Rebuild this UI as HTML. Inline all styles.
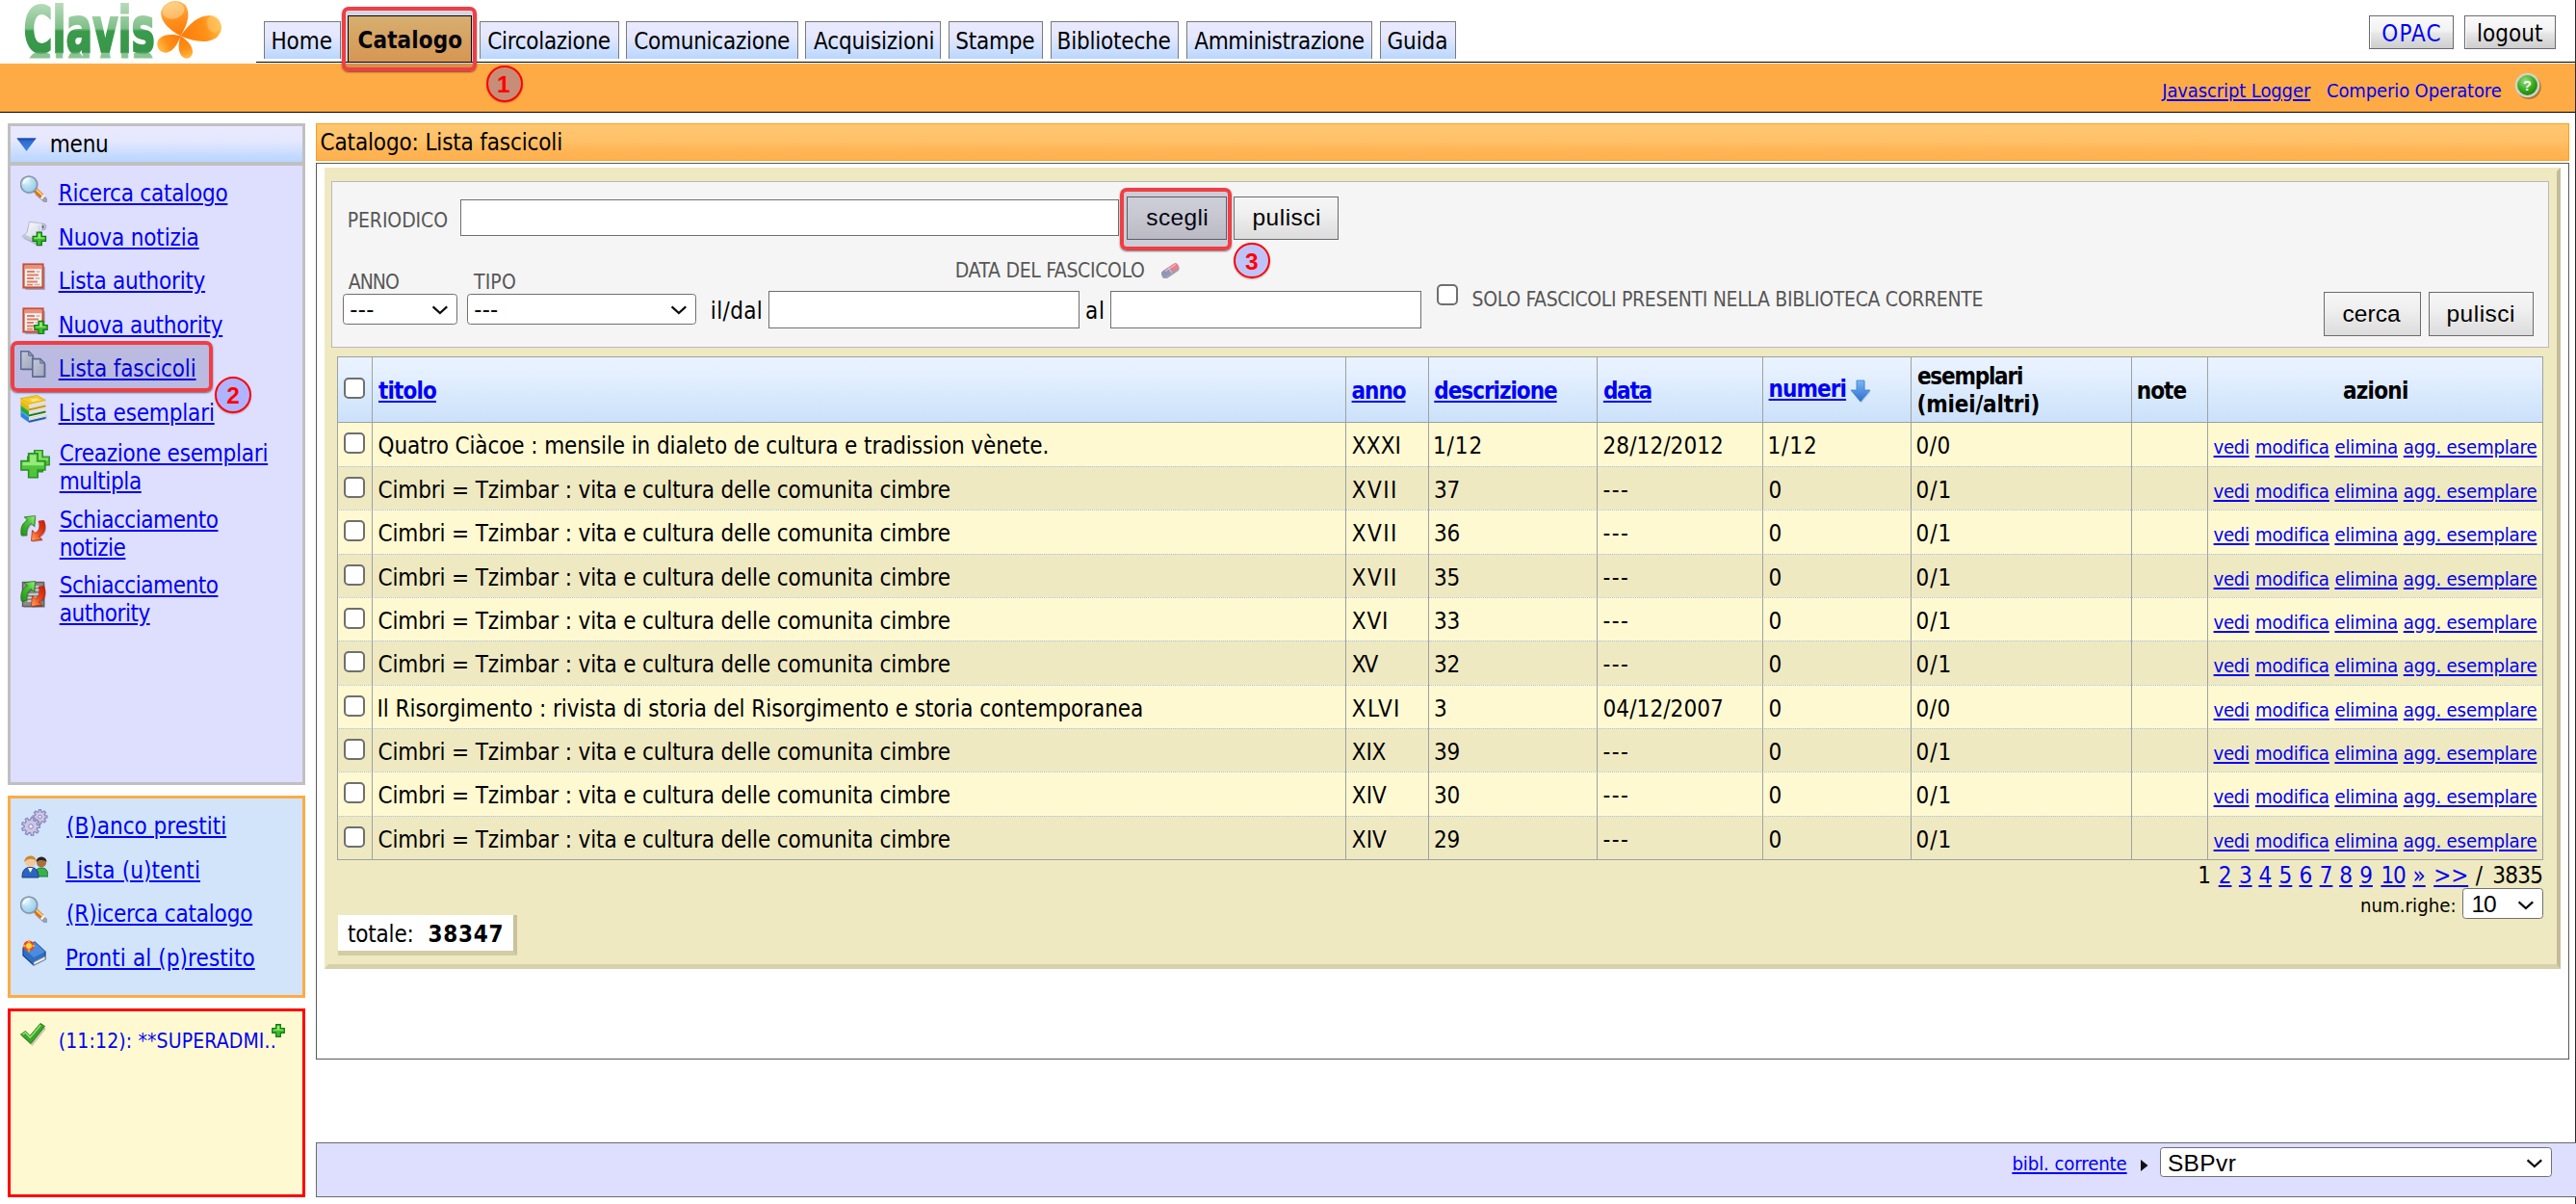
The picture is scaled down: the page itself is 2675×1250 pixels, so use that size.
<!DOCTYPE html>
<html lang="it">
<head>
<meta charset="utf-8">
<title>Clavis - Catalogo: Lista fascicoli</title>
<style>
html,body{margin:0;padding:0;background:#fff;}
body{width:2675px;height:1250px;position:relative;overflow:hidden;font-family:"DejaVu Sans Condensed","Liberation Sans","DejaVu Sans",sans-serif;font-size:24px;color:#000;}
div,span,svg,a{position:absolute;box-sizing:border-box;}
.t{white-space:nowrap;}
.u{text-decoration:underline;text-decoration-thickness:2px;text-underline-offset:2px;}
.b{color:#0000f0;}

</style>
</head>
<body>
<!-- header -->
<svg style="left:20px;top:0px" width="216" height="64" viewBox="0 0 216 64"><defs><linearGradient id="lg1" gradientUnits="userSpaceOnUse" x1="0" y1="5" x2="0" y2="54"><stop offset="0" stop-color="#b5d9b8"/><stop offset=".5" stop-color="#7fbf88"/><stop offset=".56" stop-color="#3b9b4c"/><stop offset="1" stop-color="#37964a"/></linearGradient><linearGradient id="lg2" gradientUnits="userSpaceOnUse" x1="0" y1="54" x2="0" y2="62"><stop offset="0" stop-color="#6db577" stop-opacity=".8"/><stop offset="1" stop-color="#8cc694" stop-opacity=".25"/></linearGradient><linearGradient id="pg1" x1="0" y1="0" x2="1" y2="0"><stop offset="0" stop-color="#ff7a08"/><stop offset=".55" stop-color="#ff9522"/><stop offset="1" stop-color="#ffc46a"/></linearGradient><linearGradient id="pg2" x1="0" y1="0" x2="1" y2="0"><stop offset="0" stop-color="#ff7a08"/><stop offset=".6" stop-color="#ff9118"/><stop offset="1" stop-color="#ffbe4a"/></linearGradient><clipPath id="cpr"><rect x="0" y="54.500" width="150" height="6"/></clipPath></defs><g transform="translate(4.500 0) scale(.688 1)"><text x="0" y="53.600" font-family="'DejaVu Sans Condensed','Liberation Sans','DejaVu Sans',sans-serif" font-weight="700" font-size="66" fill="url(#lg1)" stroke="url(#lg1)" stroke-width="2.200">Clavis</text></g><g clip-path="url(#cpr)"><g transform="translate(4.500 108) scale(.688 -1)"><text x="0" y="53.600" font-family="'DejaVu Sans Condensed','Liberation Sans','DejaVu Sans',sans-serif" font-weight="700" font-size="66" fill="url(#lg2)">Clavis</text></g></g><path transform="translate(167.5 37.3) rotate(-105)" d="M0 0 C10.4 -10.9 20.4 -16.2 29.6 -13.1 C39.6 -7.2 39.6 7.2 29.6 13.1 C20.4 16.2 10.4 10.9 0 0Z" fill="url(#pg1)"/><path transform="translate(167.5 37.3) rotate(-16)" d="M0 0 C12.2 -10.1 23.9 -15.1 34.8 -12.2 C46.5 -6.8 46.5 6.8 34.8 12.2 C23.9 15.1 12.2 10.1 0 0Z" fill="url(#pg2)"/><path transform="translate(167.5 37.3) rotate(151)" d="M0 0 C7.4 -6.8 14.6 -10.1 21.2 -8.1 C28.4 -4.5 28.4 4.5 21.2 8.1 C14.6 10.1 7.4 6.8 0 0Z" fill="url(#pg2)"/><path transform="translate(167.5 37.3) rotate(70)" d="M0 0 C6.9 -5.2 13.5 -7.8 19.6 -6.3 C26.2 -3.5 26.2 3.5 19.6 6.3 C13.5 7.8 6.9 5.2 0 0Z" fill="url(#pg2)"/><ellipse cx="160" cy="11" rx="11.500" ry="8.500" fill="#ffe2ae" opacity=".5" transform="rotate(-12 160 11)"/><ellipse cx="202" cy="25" rx="7" ry="9" fill="#ffd07a" opacity=".45" transform="rotate(-16 202 25)"/></svg>
<div style="left:0px;top:66px;width:2674px;height:51px;background:#ffab45;border-bottom:1px solid #000"></div>
<div style="left:2674px;top:0px;width:1px;height:1250px;background:#2a2a2a"></div>
<div style="left:274px;top:22px;width:80px;height:39px;border:1px solid #7a7a7a;border-bottom:0;background:linear-gradient(#e9e9ff 0%,#e6e8ff 35%,#cfe0ff 70%,#b9d6ff 100%)"></div>
<span class="t" style="left:281.40px;top:28px;font-size:24px;line-height:30px;letter-spacing:-0.028px;">Home</span>
<div style="left:498px;top:22px;width:145px;height:39px;border:1px solid #7a7a7a;border-bottom:0;background:linear-gradient(#e9e9ff 0%,#e6e8ff 35%,#cfe0ff 70%,#b9d6ff 100%)"></div>
<span class="t" style="left:506.30px;top:28px;font-size:24px;line-height:30px;letter-spacing:-0.315px;">Circolazione</span>
<div style="left:650px;top:22px;width:179px;height:39px;border:1px solid #7a7a7a;border-bottom:0;background:linear-gradient(#e9e9ff 0%,#e6e8ff 35%,#cfe0ff 70%,#b9d6ff 100%)"></div>
<span class="t" style="left:658.20px;top:28px;font-size:24px;line-height:30px;letter-spacing:-0.261px;">Comunicazione</span>
<div style="left:836px;top:22px;width:141px;height:39px;border:1px solid #7a7a7a;border-bottom:0;background:linear-gradient(#e9e9ff 0%,#e6e8ff 35%,#cfe0ff 70%,#b9d6ff 100%)"></div>
<span class="t" style="left:845.00px;top:28px;font-size:24px;line-height:30px;letter-spacing:-0.145px;">Acquisizioni</span>
<div style="left:985px;top:22px;width:98px;height:39px;border:1px solid #7a7a7a;border-bottom:0;background:linear-gradient(#e9e9ff 0%,#e6e8ff 35%,#cfe0ff 70%,#b9d6ff 100%)"></div>
<span class="t" style="left:992.30px;top:28px;font-size:24px;line-height:30px;letter-spacing:-0.250px;">Stampe</span>
<div style="left:1091px;top:22px;width:133px;height:39px;border:1px solid #7a7a7a;border-bottom:0;background:linear-gradient(#e9e9ff 0%,#e6e8ff 35%,#cfe0ff 70%,#b9d6ff 100%)"></div>
<span class="t" style="left:1097.60px;top:28px;font-size:24px;line-height:30px;letter-spacing:-0.204px;">Biblioteche</span>
<div style="left:1232px;top:22px;width:193px;height:39px;border:1px solid #7a7a7a;border-bottom:0;background:linear-gradient(#e9e9ff 0%,#e6e8ff 35%,#cfe0ff 70%,#b9d6ff 100%)"></div>
<span class="t" style="left:1240.30px;top:28px;font-size:24px;line-height:30px;letter-spacing:-0.369px;">Amministrazione</span>
<div style="left:1433px;top:22px;width:79px;height:39px;border:1px solid #7a7a7a;border-bottom:0;background:linear-gradient(#e9e9ff 0%,#e6e8ff 35%,#cfe0ff 70%,#b9d6ff 100%)"></div>
<span class="t" style="left:1440.40px;top:28px;font-size:24px;line-height:30px;letter-spacing:-0.083px;">Guida</span>
<div style="left:361px;top:16px;width:129px;height:48px;border:1px solid #000;border-bottom:0;background:linear-gradient(#ffcf75,#ffb252)"></div>
<span class="t" style="left:371.60px;top:27px;font-size:24px;line-height:30px;font-weight:700;letter-spacing:0.087px;">Catalogo</span>
<div style="left:266px;top:64px;width:2408px;height:1px;background:#000"></div>
<div style="left:2460px;top:16px;width:88px;height:35px;border:1px solid #6a6a6a;background:linear-gradient(#fafafa 0%,#f2f2f2 46%,#e6e6e6 54%,#cecece 100%);box-shadow:inset 1px 1px 0 #fff"></div>
<span class="t" style="left:2473.30px;top:20px;font-size:24px;line-height:30px;color:#0000f4;letter-spacing:1.127px;">OPAC</span>
<div style="left:2559px;top:16px;width:95px;height:35px;border:1px solid #6a6a6a;background:linear-gradient(#fafafa 0%,#f2f2f2 46%,#e6e6e6 54%,#cecece 100%);box-shadow:inset 1px 1px 0 #fff"></div>
<span class="t" style="left:2571.90px;top:20px;font-size:24px;line-height:30px;letter-spacing:0.078px;">logout</span>
<a class="t u" style="left:2245.20px;top:81px;font-size:20px;line-height:26px;color:#0000f4;letter-spacing:-0.109px;">Javascript Logger</a>
<span class="t" style="left:2416.00px;top:81px;font-size:20px;line-height:26px;color:#0000f4;letter-spacing:-0.124px;">Comperio Operatore</span>
<svg style="left:2609.200px;top:73.400px" width="32" height="32" viewBox="0 0 32 32">
<defs><radialGradient id="hg" cx=".4" cy=".3" r=".75"><stop offset="0" stop-color="#9be27c"/><stop offset=".6" stop-color="#35a81e"/><stop offset="1" stop-color="#1f7d10"/></radialGradient></defs>
<circle cx="17" cy="17.200" r="12.800" fill="#5d4a20" opacity=".5"/>
<circle cx="15.500" cy="15.500" r="12.800" fill="#d2d2ca"/><circle cx="15.500" cy="15.500" r="10.400" fill="url(#hg)"/>
<text x="15.500" y="20.600" text-anchor="middle" font-family="'Liberation Sans',sans-serif" font-weight="700" font-size="14.500" fill="#fff">?</text></svg>
<!-- sidebar menu -->
<div style="left:8px;top:128px;width:309px;height:687px;border:3px solid #c0c0c0;background:#dedeff"></div>
<div style="left:11px;top:131px;width:303px;height:37.5px;background:linear-gradient(#e9e9ff 0%,#e6e8ff 40%,#c4dbff 80%,#b8d5ff 100%)"></div>
<div style="left:11px;top:168px;width:303px;height:4px;background:#c0c0c0"></div>
<svg style="left:16px;top:141px" width="24" height="18" viewBox="0 0 24 18"><defs><linearGradient id="tg" x1="0" y1="0" x2="0" y2="1"><stop offset="0" stop-color="#2a62c8"/><stop offset="1" stop-color="#3b8ae6"/></linearGradient></defs><path d="M1.500 2.500 L21.500 2.500 L11.500 16 Z" fill="url(#tg)"/><path d="M1.500 2.500 L21.500 2.500 L20 4.500 L3 4.500Z" fill="#1d4fae"/></svg>
<span class="t" style="left:51.80px;top:135px;font-size:24px;line-height:30px;letter-spacing:-0.237px;">menu</span>
<svg style="left:21px;top:182px" width="28" height="28" viewBox="0 0 28 28"><defs><radialGradient id="mg" cx=".36" cy=".3" r=".8"><stop offset="0" stop-color="#e4f5fd"/><stop offset=".45" stop-color="#b4def4"/><stop offset="1" stop-color="#8fc9ea"/></radialGradient>
<linearGradient id="mh" x1="0" y1="0" x2="1" y2="0" gradientTransform="rotate(-48 .5 .5)"><stop offset="0" stop-color="#e8801c"/><stop offset=".5" stop-color="#ffd27a"/><stop offset="1" stop-color="#e8801c"/></linearGradient></defs>
<path d="M17 17.500 L25.500 25" stroke="#5a6068" stroke-width="5.400" stroke-linecap="round" opacity=".5" transform="translate(1.400,1.600)"/>
<path d="M15 14.800 L23.600 22.600" stroke="#d8741a" stroke-width="5.200" stroke-linecap="butt"/>
<path d="M15.600 14 L24.200 21.800" stroke="#ffcf7a" stroke-width="1.800"/>
<path d="M22.600 21.700 L24.400 23.300" stroke="#f4f4f4" stroke-width="5.200"/>
<circle cx="9.600" cy="10" r="9.300" fill="#6a7a88" opacity=".35"/>
<circle cx="9" cy="9.400" r="8.500" fill="url(#mg)" stroke="#8696a6" stroke-width="1.500"/>
<path d="M3.800 8 A5.600 5.600 0 0 1 9 3.600" stroke="#fff" stroke-width="1.800" fill="none" stroke-linecap="round" opacity=".9"/></svg>
<a class="t u" style="left:60.70px;top:186px;font-size:24px;line-height:30px;color:#0000f4;letter-spacing:-0.231px;">Ricerca catalogo</a>
<svg style="left:21px;top:227.5px" width="28" height="28" viewBox="0 0 28 28"><defs><linearGradient id="sc" x1="0" y1="0" x2="1" y2="1"><stop offset="0" stop-color="#ffffff"/><stop offset="1" stop-color="#cfd3e2"/></linearGradient></defs>
<path d="M2 18.500 L15 25 L21 22 L8 16z" fill="#7c8098" opacity=".45" transform="translate(1,1)"/>
<path d="M9.500 2.400 L21.500 3.600 L19.500 16.500 L14.500 23.600 L1.800 17.400 L7 13.500z" fill="url(#sc)" stroke="#aab0c4" stroke-width=".9"/>
<path d="M1.800 17.400 L14.500 23.600 L16.500 21 L4.500 15.200z" fill="#c2c7d8"/>
<ellipse cx="23" cy="7.500" rx="3.800" ry="3.400" fill="#c9cde0" stroke="#9aa0b8" stroke-width=".9"/>
<ellipse cx="23.300" cy="7.600" rx="1.500" ry="1.900" fill="#6b7192"/>
<path d="M18.500 3.300 L22.500 4.200 L22.500 11 L19.800 10.800z" fill="#dfe2ee"/><g transform="translate(19.8,19.9) scale(0.96)"><path d="M-2.6 -7 h5.2 v4.4 h4.4 v5.2 h-4.4 v4.4 h-5.2 v-4.4 h-4.4 v-5.2 h4.4z" fill="#3dbb2c" stroke="#0f7a12" stroke-width="1.3"/><path d="M-1.4 -5.6 h2.8 v4.2 h4.2 v1.2 h-11.2 v-1.2 h4.2z" fill="#a4f284" opacity=".85"/></g></svg>
<a class="t u" style="left:60.70px;top:232px;font-size:24px;line-height:30px;color:#0000f4;letter-spacing:-0.141px;">Nuova notizia</a>
<svg style="left:22px;top:273px" width="28" height="28" viewBox="0 0 28 28"><rect x="2.500" y="2" width="20.500" height="24.500" rx="1" fill="#6a6a78" opacity=".5" transform="translate(1.800,1.800)"/>
<rect x="2.500" y="1.500" width="20" height="24" fill="#fdf1ec" stroke="#c4503a" stroke-width="2.200"/>
<rect x="3.600" y="2.600" width="17.800" height="3.600" fill="#e8917c"/>
<g stroke="#d9806c" stroke-width="1.800"><path d="M6 9 h8 M6 12.500 h12 M6 16 h7 M6 19.500 h11 M6 22.600 h6"/></g>
<g stroke="#b8b8b8" stroke-width="1.500"><path d="M15.500 9 h4 M14.500 16 h5 M13.500 22.600 h6"/></g></svg>
<a class="t u" style="left:60.70px;top:277px;font-size:24px;line-height:30px;color:#0000f4;letter-spacing:-0.252px;">Lista authority</a>
<svg style="left:22px;top:318.5px" width="28" height="28" viewBox="0 0 28 28"><rect x="2.500" y="2" width="20.500" height="24.500" rx="1" fill="#6a6a78" opacity=".5" transform="translate(1.800,1.800)"/>
<rect x="2.500" y="1.500" width="20" height="24" fill="#fdf1ec" stroke="#c4503a" stroke-width="2.200"/>
<rect x="3.600" y="2.600" width="17.800" height="3.600" fill="#e8917c"/>
<g stroke="#d9806c" stroke-width="1.800"><path d="M6 9 h8 M6 12.500 h12 M6 16 h7 M6 19.500 h11 M6 22.600 h6"/></g>
<g stroke="#b8b8b8" stroke-width="1.500"><path d="M15.500 9 h4 M14.500 16 h5 M13.500 22.600 h6"/></g><g transform="translate(20.5,21) scale(0.95)"><path d="M-2.6 -7 h5.2 v4.4 h4.4 v5.2 h-4.4 v4.4 h-5.2 v-4.4 h-4.4 v-5.2 h4.4z" fill="#3dbb2c" stroke="#0f7a12" stroke-width="1.3"/><path d="M-1.4 -5.6 h2.8 v4.2 h4.2 v1.2 h-11.2 v-1.2 h4.2z" fill="#a4f284" opacity=".85"/></g></svg>
<a class="t u" style="left:60.70px;top:323px;font-size:24px;line-height:30px;color:#0000f4;letter-spacing:-0.251px;">Nuova authority</a>
<svg style="left:21px;top:364px" width="28" height="28" viewBox="0 0 28 28"><defs><linearGradient id="pg" x1="0" y1="0" x2="1" y2="1"><stop offset="0" stop-color="#eceff4"/><stop offset="1" stop-color="#bcc6d6"/></linearGradient></defs><g transform="translate(-0.3,-0.3)"><path d="M1 1 h8 l4.500 4.500 v14 h-12.500z" fill="#4a5880" opacity=".45" transform="translate(1.200,1.400)"/><path d="M1 1 h8 l4.500 4.500 v14 h-12.500z" fill="url(#pg)" stroke="#6c7b9c" stroke-width="1.600" stroke-linejoin="round"/><path d="M9 1 v4.500 h4.500z" fill="#aeb9cc" stroke="#6c7b9c" stroke-width="1"/></g><g transform="translate(11.8,7.6)"><path d="M1 1 h8 l4.500 4.500 v14 h-12.500z" fill="#4a5880" opacity=".45" transform="translate(1.200,1.400)"/><path d="M1 1 h8 l4.500 4.500 v14 h-12.500z" fill="url(#pg)" stroke="#6c7b9c" stroke-width="1.600" stroke-linejoin="round"/><path d="M9 1 v4.500 h4.500z" fill="#aeb9cc" stroke="#6c7b9c" stroke-width="1"/></g></svg>
<a class="t u" style="left:60.70px;top:368px;font-size:24px;line-height:30px;color:#0000f4;letter-spacing:-0.132px;">Lista fascicoli</a>
<svg style="left:21px;top:409.5px" width="28" height="30" viewBox="0 0 28 30"><path d="M1 23 L9.500 29 L27.500 25 L27.500 21z" fill="#5a5a7a" opacity=".3"/><g transform="translate(0,12.5)"><path d="M0.500 3.500 L9 9.500 L9 16 L0.500 10z" fill="#2a86e2"/><path d="M0.500 3.500 L9 9.500 L9 11.300 L0.500 5.300z" fill="#7cc0ff" opacity=".6"/><path d="M9 9.500 L26.500 5.500 L26.500 12 L9 16z" fill="#f4f4f2"/><path d="M9 11.600 L26.500 7.600 M9 13.400 L26.500 9.400" stroke="#c4c4bc" stroke-width=".8"/><path d="M9 14.300 L26.500 10.300 L26.500 12.200 L9 16.200z" fill="#1c5aa8"/></g><g transform="translate(0,6.3)"><path d="M0.500 3.500 L9 9.500 L9 16 L0.500 10z" fill="#2aa638"/><path d="M0.500 3.500 L9 9.500 L9 11.300 L0.500 5.300z" fill="#7ee48a" opacity=".6"/><path d="M9 9.500 L26.500 5.500 L26.500 12 L9 16z" fill="#f4f4f2"/><path d="M9 11.600 L26.500 7.600 M9 13.400 L26.500 9.400" stroke="#c4c4bc" stroke-width=".8"/><path d="M9 14.300 L26.500 10.300 L26.500 12.200 L9 16.200z" fill="#167a24"/></g><g transform="translate(0,0.2)"><path d="M0.500 3.500 L9 9.500 L9 16 L0.500 10z" fill="#ecb800"/><path d="M0.500 3.500 L9 9.500 L9 11.300 L0.500 5.300z" fill="#ffe47a" opacity=".6"/><path d="M9 9.500 L26.500 5.500 L26.500 12 L9 16z" fill="#f4f4f2"/><path d="M9 11.600 L26.500 7.600 M9 13.400 L26.500 9.400" stroke="#c4c4bc" stroke-width=".8"/><path d="M9 14.300 L26.500 10.300 L26.500 12.200 L9 16.200z" fill="#c89400"/></g><path d="M0.500 3.700 L17.500 0.500 L26.500 5.700 L9 9.700z" fill="#f6cb25" stroke="#cf9f08" stroke-width=".7"/><path d="M9.500 4.800 L17 3.400 L20.500 5.300 L13 6.900z" fill="#fbe78c"/></svg>
<a class="t u" style="left:60.70px;top:414px;font-size:24px;line-height:30px;color:#0000f4;letter-spacing:-0.164px;">Lista esemplari</a>
<svg style="left:20.5px;top:467px" width="32" height="30" viewBox="0 0 32 30"><g transform="translate(19,11.500) scale(.9)"><path d="M-4.800 -12.500 h9.600 v7.700 h7.700 v9.600 h-7.700 v7.700 h-9.600 v-7.700 h-7.700 v-9.600 h7.700z" fill="#4fbf3d" stroke="#2a9422" stroke-width="1.500"/><path d="M-3.300 -11 h6.600 v7.700 h7.700 v3.300 h-22 v-3.300 h7.700z" fill="#9bec7c" opacity=".7"/></g>
<g transform="translate(13.400,16.200)"><path d="M-4.800 -12.500 h9.600 v7.700 h7.700 v9.600 h-7.700 v7.700 h-9.600 v-7.700 h-7.700 v-9.600 h7.700z" fill="#50c43c" stroke="#279020" stroke-width="1.500"/>
<path d="M-3.300 -11 h6.600 v7.700 h7.700 v3.300 h-22 v-3.300 h7.700z" fill="#a8f28a" opacity=".8"/></g></svg>
<a class="t u" style="left:61.70px;top:456px;font-size:24px;line-height:30px;color:#0000f4;letter-spacing:-0.238px;">Creazione esemplari</a>
<a class="t u" style="left:61.70px;top:485px;font-size:24px;line-height:30px;color:#0000f4;letter-spacing:-0.385px;">multipla</a>
<svg style="left:21px;top:535px" width="29" height="29" viewBox="0 0 29 29"><defs><linearGradient id="ag" x1="0" y1="1" x2="1" y2="0"><stop offset="0" stop-color="#1f8f14"/><stop offset=".6" stop-color="#4cc23a"/><stop offset="1" stop-color="#a6f08a"/></linearGradient>
<linearGradient id="ar" x1="1" y1="0" x2="0" y2="1"><stop offset="0" stop-color="#c81808"/><stop offset=".55" stop-color="#ee4a1e"/><stop offset="1" stop-color="#ffb066"/></linearGradient></defs><path d="M15.500 0.500 L14.500 11.500 L11.300 8.600 C8 10.500 6.200 15 6.800 20.500 L1.200 21 C-0.300 13 2.500 7.500 7.600 5 L4.200 1.800Z" fill="#30403a" opacity=".35" transform="translate(1,1.300)"/>
<path d="M11.500 26.500 L12.500 15.500 L15.700 18.400 C19.500 16.500 21 12 19.200 6 L24.600 5.500 C27.500 13.500 25 19.500 19.400 22 L22.800 25.200Z" fill="#40302a" opacity=".35" transform="translate(1,1.300)"/>
<path d="M15.500 0.500 L14.500 11.500 L11.300 8.600 C8 10.500 6.200 15 6.800 20.500 L1.200 21 C-0.300 13 2.500 7.500 7.600 5 L4.200 1.800Z" fill="url(#ag)" stroke="#1d7a12" stroke-width=".8"/>
<path d="M11.500 26.500 L12.500 15.500 L15.700 18.400 C19.500 16.500 21 12 19.200 6 L24.600 5.500 C27.500 13.500 25 19.500 19.400 22 L22.800 25.200Z" fill="url(#ar)" stroke="#b32408" stroke-width=".8"/></svg>
<a class="t u" style="left:61.70px;top:525px;font-size:24px;line-height:30px;color:#0000f4;letter-spacing:-0.457px;">Schiacciamento</a>
<a class="t u" style="left:61.70px;top:554px;font-size:24px;line-height:30px;color:#0000f4;letter-spacing:-0.465px;">notizie</a>
<svg style="left:21px;top:603px" width="29" height="29" viewBox="0 0 29 29"><defs><linearGradient id="ag" x1="0" y1="1" x2="1" y2="0"><stop offset="0" stop-color="#1f8f14"/><stop offset=".6" stop-color="#4cc23a"/><stop offset="1" stop-color="#a6f08a"/></linearGradient>
<linearGradient id="ar" x1="1" y1="0" x2="0" y2="1"><stop offset="0" stop-color="#c81808"/><stop offset=".55" stop-color="#ee4a1e"/><stop offset="1" stop-color="#ffb066"/></linearGradient></defs><rect x="2.500" y="1.500" width="22" height="25" fill="#5c5c66" opacity=".45" transform="translate(1.200,1.200)"/><rect x="2.500" y="1.500" width="22" height="25" fill="#8a8a8a" stroke="#5e5e5e" stroke-width="1.400"/><g stroke="#dcdcdc" stroke-width="1.700"><path d="M5 14 h17 M5 17.500 h17 M5 21 h17 M13 6 h9 M13 9.500 h9"/></g><path d="M15.500 0.500 L14.500 11.500 L11.300 8.600 C8 10.500 6.200 15 6.800 20.500 L1.200 21 C-0.300 13 2.500 7.500 7.600 5 L4.200 1.800Z" fill="#30403a" opacity=".35" transform="translate(1,1.300)"/>
<path d="M11.500 26.500 L12.500 15.500 L15.700 18.400 C19.500 16.500 21 12 19.200 6 L24.600 5.500 C27.500 13.500 25 19.500 19.400 22 L22.800 25.200Z" fill="#40302a" opacity=".35" transform="translate(1,1.300)"/>
<path d="M15.500 0.500 L14.500 11.500 L11.300 8.600 C8 10.500 6.200 15 6.800 20.500 L1.200 21 C-0.300 13 2.500 7.500 7.600 5 L4.200 1.800Z" fill="url(#ag)" stroke="#1d7a12" stroke-width=".8"/>
<path d="M11.500 26.500 L12.500 15.500 L15.700 18.400 C19.500 16.500 21 12 19.200 6 L24.600 5.500 C27.500 13.500 25 19.500 19.400 22 L22.800 25.200Z" fill="url(#ar)" stroke="#b32408" stroke-width=".8"/></svg>
<a class="t u" style="left:61.70px;top:593px;font-size:24px;line-height:30px;color:#0000f4;letter-spacing:-0.457px;">Schiacciamento</a>
<a class="t u" style="left:61.70px;top:622px;font-size:24px;line-height:30px;color:#0000f4;letter-spacing:-0.488px;">authority</a>
<div style="left:10.8px;top:354.4px;width:210px;height:53px;border:4.400px solid #ef3e44;border-radius:7px;background:rgba(28,28,88,.18);box-shadow:0 1px 2px rgba(0,0,0,.55)"></div>
<div style="left:223.2px;top:391px;width:38px;height:38px;border:2.300px solid #ff0000;border-radius:50%;background:rgba(50,62,255,.27);box-shadow:0 1px 1.500px rgba(0,0,0,.3)"></div>
<span class="t" style="left:235.30px;top:396px;font-size:24.5px;line-height:29px;font-family:'Liberation Sans','DejaVu Sans',sans-serif;font-weight:700;color:#ff0000;">2</span>
<!-- quick links -->
<div style="left:8px;top:826px;width:309px;height:210px;border:3px solid #ffab45;background:#d1e4fa"></div>
<svg style="left:22px;top:839.5px" width="28" height="28" viewBox="0 0 28 28"><path d="M26.9 7.0 L26.9 9.0 L24.7 9.4 L24.2 10.7 L25.5 12.5 L24.0 14.0 L22.2 12.7 L20.9 13.2 L20.5 15.4 L18.5 15.4 L18.1 13.2 L16.8 12.7 L15.0 14.0 L13.5 12.5 L14.8 10.7 L14.3 9.4 L12.1 9.0 L12.1 7.0 L14.3 6.6 L14.8 5.3 L13.5 3.5 L15.0 2.0 L16.8 3.3 L18.1 2.8 L18.5 0.6 L20.5 0.6 L20.9 2.8 L22.2 3.3 L24.0 2.0 L25.5 3.5 L24.2 5.3 L24.7 6.6Z" fill="#cbc7e8" stroke="#8d86bd" stroke-width="1.300"/><circle cx="19.5" cy="8" r="1.8" fill="#eeedf8" stroke="#8d86bd" stroke-width="1"/><path d="M19.4 16.8 L19.4 19.2 L16.7 19.5 L16.1 21.1 L18.0 23.2 L16.5 24.9 L14.1 23.5 L12.7 24.3 L12.8 27.1 L10.5 27.5 L9.6 24.8 L8.0 24.5 L6.3 26.7 L4.3 25.6 L5.3 23.0 L4.3 21.7 L1.5 22.3 L0.7 20.1 L3.2 18.8 L3.2 17.2 L0.7 15.9 L1.5 13.7 L4.3 14.3 L5.3 13.0 L4.3 10.4 L6.3 9.3 L8.0 11.5 L9.6 11.2 L10.5 8.5 L12.8 8.9 L12.7 11.7 L14.1 12.5 L16.5 11.1 L18.0 12.8 L16.1 14.9 L16.7 16.5Z" fill="#cbc7e8" stroke="#8d86bd" stroke-width="1.300"/><circle cx="10" cy="18" r="2.3" fill="#eeedf8" stroke="#8d86bd" stroke-width="1"/></svg>
<a class="t u" style="left:69.10px;top:843px;font-size:24px;line-height:30px;color:#0000f4;">(B)anco prestiti</a>
<svg style="left:22px;top:885px" width="28" height="28" viewBox="0 0 28 28"><path d="M14 25 c0 -7 3 -9 7 -9 s7 2 7 9z" fill="#35b24a" stroke="#1f7a2d" stroke-width="1"/>
<circle cx="21" cy="10.500" r="5" fill="#a8703a"/><path d="M15.500 10 a5.500 5.500 0 0 1 11 0 c-2 -2.500 -8 -3 -11 0z" fill="#2a2420"/>
<path d="M1 26 c0 -8 3.500 -10.500 8.500 -10.500 s8.500 2.500 8.500 10.500z" fill="#2b65c0" stroke="#173f86" stroke-width="1"/>
<path d="M7 16 l2.500 5 l2.500 -5z" fill="#fff"/>
<circle cx="9.500" cy="9.500" r="5.600" fill="#f2c79c"/><path d="M3.400 10 a6.100 6.100 0 0 1 12.200 -1 c-3 -3 -9 -3.500 -12.200 1z" fill="#c98a2b"/></svg>
<a class="t u" style="left:68.10px;top:889px;font-size:24px;line-height:30px;color:#0000f4;letter-spacing:0.119px;">Lista (u)tenti</a>
<svg style="left:21px;top:930px" width="28" height="28" viewBox="0 0 28 28"><defs><radialGradient id="mg" cx=".36" cy=".3" r=".8"><stop offset="0" stop-color="#e4f5fd"/><stop offset=".45" stop-color="#b4def4"/><stop offset="1" stop-color="#8fc9ea"/></radialGradient>
<linearGradient id="mh" x1="0" y1="0" x2="1" y2="0" gradientTransform="rotate(-48 .5 .5)"><stop offset="0" stop-color="#e8801c"/><stop offset=".5" stop-color="#ffd27a"/><stop offset="1" stop-color="#e8801c"/></linearGradient></defs>
<path d="M17 17.500 L25.500 25" stroke="#5a6068" stroke-width="5.400" stroke-linecap="round" opacity=".5" transform="translate(1.400,1.600)"/>
<path d="M15 14.800 L23.600 22.600" stroke="#d8741a" stroke-width="5.200" stroke-linecap="butt"/>
<path d="M15.600 14 L24.200 21.800" stroke="#ffcf7a" stroke-width="1.800"/>
<path d="M22.600 21.700 L24.400 23.300" stroke="#f4f4f4" stroke-width="5.200"/>
<circle cx="9.600" cy="10" r="9.300" fill="#6a7a88" opacity=".35"/>
<circle cx="9" cy="9.400" r="8.500" fill="url(#mg)" stroke="#8696a6" stroke-width="1.500"/>
<path d="M3.800 8 A5.600 5.600 0 0 1 9 3.600" stroke="#fff" stroke-width="1.800" fill="none" stroke-linecap="round" opacity=".9"/></svg>
<a class="t u" style="left:69.10px;top:934px;font-size:24px;line-height:30px;color:#0000f4;letter-spacing:-0.172px;">(R)icerca catalogo</a>
<svg style="left:21px;top:975px" width="28" height="28" viewBox="0 0 28 28"><path d="M3 9 l12 -6 l11 10 v8 l-12 6 l-11 -10z" fill="#2f6fc4" stroke="#173f86" stroke-width="1.200"/>
<path d="M14 27 l12 -6 v-3 l-12 6z" fill="#f4f4f4" stroke="#8c8c8c" stroke-width=".8"/>
<path d="M3 9 l12 -6 l11 10 l-12 6z" fill="#4b8be0"/>
<circle cx="9" cy="7" r="5.600" fill="#e8452c"/><circle cx="9" cy="7" r="3" fill="#ffd83a"/>
<path d="M9 0 l1.500 3.500 l-3 0z M9 14 l1.500 -3.500 l-3 0z M2 7 l3.500 -1.500 l0 3z M16 7 l-3.500 -1.500 l0 3z" fill="#ffb02e"/></svg>
<a class="t u" style="left:68.10px;top:980px;font-size:24px;line-height:30px;color:#0000f4;letter-spacing:0.094px;">Pronti al (p)restito</a>
<!-- log -->
<div style="left:8px;top:1046.5px;width:309px;height:196.5px;border:3px solid #ff0000;background:#fff9d1"></div>
<svg style="left:20px;top:1061px" width="30" height="26" viewBox="0 0 30 26"><path d="M2 14 l5 -3.500 l4.500 5 l11 -13 l4.500 3 l-14.500 18z" fill="#6e6e6e" opacity=".35" transform="translate(1,1.600)"/>
<path d="M1.500 13 l5 -3.500 l4.500 5 l11 -13 l4.500 3 l-14.500 18z" fill="#3aa827" stroke="#247d17" stroke-width="1"/>
<path d="M3.500 12.800 l3 -1.800 l4.700 5.200 l11 -13" stroke="#9be27c" stroke-width="1.400" fill="none"/></svg>
<span class="t" style="left:60.70px;top:1068px;font-size:21px;line-height:26px;color:#0000f4;letter-spacing:0.133px;">(11:12): **SUPERADMI..</span>
<svg style="left:281px;top:1061.5px" width="16" height="16" viewBox="0 0 16 16"><g transform="translate(8,8) scale(0.9)"><path d="M-2.6 -7 h5.2 v4.4 h4.4 v5.2 h-4.4 v4.4 h-5.2 v-4.4 h-4.4 v-5.2 h4.4z" fill="#3dbb2c" stroke="#0f7a12" stroke-width="1.3"/><path d="M-1.4 -5.6 h2.8 v4.2 h4.2 v1.2 h-11.2 v-1.2 h4.2z" fill="#a4f284" opacity=".85"/></g></svg>
<!-- main -->
<div style="left:328px;top:128px;width:2340px;height:39px;border:1.500px solid #ff9f1c;background:linear-gradient(#ffc670 0%,#ffc168 45%,#ffb555 75%,#ffb04e 100%)"></div>
<span class="t" style="left:332.60px;top:133px;font-size:24px;line-height:30px;letter-spacing:-0.146px;">Catalogo: Lista fascicoli</span>
<div style="left:328px;top:169px;width:2340px;height:931px;border:1px solid #5a5a5a;background:#fff"></div>
<div style="left:337px;top:174px;width:2322px;height:831.5px;background:#efe9c1;border-style:solid;border-width:4.500px 4.800px 5px 4.500px;border-color:#efe9c1 #c3bc99 #d6d0ab #efe9c1"></div>
<div style="left:344px;top:188px;width:2303px;height:173px;border:1px solid #b9b9b9;background:#f5f5f5"></div>
<span class="t" style="left:360.70px;top:216px;font-size:21px;line-height:26px;color:#575757;letter-spacing:-0.088px;">PERIODICO</span>
<div style="left:478px;top:207px;width:684px;height:38px;border:1px solid #6f6f6f;background:#fff"></div>
<div style="left:1170.4px;top:203.5px;width:103.4px;height:45.3px;border:1px solid #6c6c6c;background:linear-gradient(#f6f6f6 0%,#efefef 40%,#dddcdc 100%)"></div>
<span class="t" style="left:1190.30px;top:211px;font-size:24.5px;line-height:29px;font-family:'Liberation Sans','DejaVu Sans',sans-serif;letter-spacing:0.361px;">scegli</span>
<div style="left:1163.3px;top:194.8px;width:115.5px;height:65.4px;border:4.400px solid #ef3e44;border-radius:7px;background:rgba(28,28,88,.18);box-shadow:0 1px 2px rgba(0,0,0,.55)"></div>
<div style="left:1281.2px;top:203.5px;width:108.6px;height:45.3px;border:1px solid #6c6c6c;background:linear-gradient(#f6f6f6 0%,#efefef 40%,#dddcdc 100%)"></div>
<span class="t" style="left:1300.50px;top:211px;font-size:24.5px;line-height:29px;font-family:'Liberation Sans','DejaVu Sans',sans-serif;letter-spacing:0.494px;">pulisci</span>
<div style="left:1281.25px;top:251.85px;width:37.5px;height:37.5px;border:2.300px solid #ff0000;border-radius:50%;background:rgba(50,62,255,.27);box-shadow:0 1px 1.500px rgba(0,0,0,.3)"></div>
<span class="t" style="left:1293.10px;top:257px;font-size:24.5px;line-height:29px;font-family:'Liberation Sans','DejaVu Sans',sans-serif;font-weight:700;color:#ff0000;">3</span>
<span class="t" style="left:361.70px;top:280px;font-size:21px;line-height:26px;color:#575757;letter-spacing:-0.960px;">ANNO</span>
<span class="t" style="left:492.00px;top:280px;font-size:21px;line-height:26px;color:#575757;letter-spacing:0.135px;">TIPO</span>
<span class="t" style="left:991.70px;top:268px;font-size:21px;line-height:26px;color:#575757;letter-spacing:-0.315px;">DATA DEL FASCICOLO</span>
<svg style="left:1205px;top:272px" width="20" height="17" viewBox="0 0 20 17"><path d="M4.500 12.500 L15.500 5" stroke="#5d6070" stroke-width="7" stroke-linecap="round" opacity=".55" transform="translate(.6,1.500)"/>
<path d="M4.500 12 L15.500 4.500" stroke="#e9808e" stroke-width="6.600" stroke-linecap="round"/>
<path d="M4.500 12 L8.700 9.100" stroke="#8d97bb" stroke-width="6.600" stroke-linecap="round"/>
<path d="M8.200 6 L11.800 11.200" stroke="#c9ccdc" stroke-width="1.200"/>
<path d="M5.500 9.300 L15.300 2.700" stroke="#f6b4bc" stroke-width="1.300" stroke-linecap="round"/></svg>
<div style="left:356.3px;top:305px;width:118.5px;height:31.6px;border:1px solid #707070;border-radius:3.500px;background:#fff"><svg style="right:7.8px;top:10.8px" width="18" height="10" viewBox="0 0 18 10"><path d="M1.600 1.400 L8.900 8 L16.200 1.400" fill="none" stroke="#0c0c0c" stroke-width="2.200"/></svg></div>
<span class="t" style="left:363.30px;top:306px;font-size:24.5px;line-height:29px;font-family:'Liberation Sans','DejaVu Sans',sans-serif;letter-spacing:0.291px;">---</span>
<div style="left:485.2px;top:305px;width:237.5px;height:31.6px;border:1px solid #707070;border-radius:3.500px;background:#fff"><svg style="right:7.8px;top:10.8px" width="18" height="10" viewBox="0 0 18 10"><path d="M1.600 1.400 L8.900 8 L16.200 1.400" fill="none" stroke="#0c0c0c" stroke-width="2.200"/></svg></div>
<span class="t" style="left:492.20px;top:306px;font-size:24.5px;line-height:29px;font-family:'Liberation Sans','DejaVu Sans',sans-serif;letter-spacing:0.291px;">---</span>
<span class="t" style="left:737.80px;top:308px;font-size:24px;line-height:30px;letter-spacing:0.356px;">il/dal</span>
<div style="left:798.4px;top:302.2px;width:322.3px;height:38.4px;border:1px solid #6f6f6f;background:#fff"></div>
<span class="t" style="left:1127.00px;top:308px;font-size:24px;line-height:30px;letter-spacing:0.770px;">al</span>
<div style="left:1153px;top:302.2px;width:322.5px;height:38.4px;border:1px solid #6f6f6f;background:#fff"></div>
<div style="left:1492px;top:294.5px;width:22.3px;height:22.3px;border:2px solid #6f6f6f;border-radius:5px;background:#fff"></div>
<span class="t" style="left:1528.50px;top:298px;font-size:21px;line-height:26px;color:#575757;letter-spacing:-0.320px;">SOLO FASCICOLI PRESENTI NELLA BIBLIOTECA CORRENTE</span>
<div style="left:2413.3px;top:303.2px;width:100.6px;height:45.6px;border:1px solid #6c6c6c;background:linear-gradient(#f6f6f6 0%,#efefef 40%,#dddcdc 100%)"></div>
<span class="t" style="left:2432.60px;top:311px;font-size:24.5px;line-height:29px;font-family:'Liberation Sans','DejaVu Sans',sans-serif;letter-spacing:0.029px;">cerca</span>
<div style="left:2522.1px;top:303.2px;width:108.6px;height:45.6px;border:1px solid #6c6c6c;background:linear-gradient(#f6f6f6 0%,#efefef 40%,#dddcdc 100%)"></div>
<span class="t" style="left:2540.50px;top:311px;font-size:24.5px;line-height:29px;font-family:'Liberation Sans','DejaVu Sans',sans-serif;letter-spacing:0.494px;">pulisci</span>
<!-- table -->
<div style="left:350px;top:370px;width:2291px;height:68px;background:linear-gradient(#eaf3ff 0%,#e4efff 30%,#d6e8fc 65%,#cbe1fa 100%)"></div>
<div style="left:350px;top:438px;width:2291px;height:46px;background:#fff9d1;"></div>
<div style="left:350px;top:484px;width:2291px;height:45px;background:#efe9c1;border-top:1px dotted #a6c1ec;"></div>
<div style="left:350px;top:529px;width:2291px;height:46px;background:#fff9d1;border-top:1px dotted #a6c1ec;"></div>
<div style="left:350px;top:575px;width:2291px;height:45px;background:#efe9c1;border-top:1px dotted #a6c1ec;"></div>
<div style="left:350px;top:620px;width:2291px;height:45px;background:#fff9d1;border-top:1px dotted #a6c1ec;"></div>
<div style="left:350px;top:665px;width:2291px;height:46px;background:#efe9c1;border-top:1px dotted #a6c1ec;"></div>
<div style="left:350px;top:711px;width:2291px;height:45px;background:#fff9d1;border-top:1px dotted #a6c1ec;"></div>
<div style="left:350px;top:756px;width:2291px;height:45px;background:#efe9c1;border-top:1px dotted #a6c1ec;"></div>
<div style="left:350px;top:801px;width:2291px;height:46px;background:#fff9d1;border-top:1px dotted #a6c1ec;"></div>
<div style="left:350px;top:847px;width:2291px;height:45px;background:#efe9c1;border-top:1px dotted #a6c1ec;"></div>
<div style="left:350px;top:370px;width:1px;height:523px;background:#9ea0a3"></div>
<div style="left:386px;top:370px;width:1px;height:523px;background:#9ea0a3"></div>
<div style="left:1397px;top:370px;width:1px;height:523px;background:#9ea0a3"></div>
<div style="left:1483px;top:370px;width:1px;height:523px;background:#9ea0a3"></div>
<div style="left:1658px;top:370px;width:1px;height:523px;background:#9ea0a3"></div>
<div style="left:1830px;top:370px;width:1px;height:523px;background:#9ea0a3"></div>
<div style="left:1984px;top:370px;width:1px;height:523px;background:#9ea0a3"></div>
<div style="left:2213px;top:370px;width:1px;height:523px;background:#9ea0a3"></div>
<div style="left:2292px;top:370px;width:1px;height:523px;background:#9ea0a3"></div>
<div style="left:2640px;top:370px;width:1px;height:523px;background:#9ea0a3"></div>
<div style="left:350px;top:370px;width:2291px;height:1px;background:#9ea0a3"></div>
<div style="left:350px;top:438px;width:2291px;height:1px;background:#9ea0a3"></div>
<div style="left:350px;top:892px;width:2291px;height:1px;background:#9ea0a3"></div>
<div style="left:357px;top:392px;width:22.3px;height:22.3px;border:2px solid #6f6f6f;border-radius:5px;background:#fff"></div>
<a class="t u" style="left:393.00px;top:391px;font-size:24px;line-height:30px;font-weight:700;color:#0000f4;letter-spacing:-0.855px;">titolo</a>
<a class="t u" style="left:1403.60px;top:391px;font-size:24px;line-height:30px;font-weight:700;color:#0000f4;letter-spacing:-1.072px;">anno</a>
<a class="t u" style="left:1489.30px;top:391px;font-size:24px;line-height:30px;font-weight:700;color:#0000f4;letter-spacing:-1.027px;">descrizione</a>
<a class="t u" style="left:1664.90px;top:391px;font-size:24px;line-height:30px;font-weight:700;color:#0000f4;letter-spacing:-1.249px;">data</a>
<a class="t u" style="left:1836.60px;top:389px;font-size:24px;line-height:30px;font-weight:700;color:#0000f4;letter-spacing:-0.910px;">numeri</a>
<svg style="left:1920.5px;top:394px" width="23" height="26" viewBox="0 0 23 26"><defs><linearGradient id="da" x1="0" y1="0" x2="0" y2="1"><stop offset="0" stop-color="#7db6f0"/><stop offset="1" stop-color="#2a6fd0"/></linearGradient></defs>
<path d="M7 1 h8 v10 h6 l-10 12 l-10 -12 h6z" fill="#8a8a8a" opacity=".3" transform="translate(1,1.200)"/>
<path d="M7 1 h8 v10 h6 l-10 12 l-10 -12 h6z" fill="url(#da)" stroke="#3b7fd6" stroke-width=".8"/></svg>
<span class="t" style="left:1990.90px;top:376px;font-size:24px;line-height:30px;font-weight:700;letter-spacing:-1.215px;">esemplari</span>
<span class="t" style="left:1990.50px;top:405px;font-size:24px;line-height:30px;font-weight:700;letter-spacing:-0.184px;">(miei/altri)</span>
<span class="t" style="left:2218.80px;top:391px;font-size:24px;line-height:30px;font-weight:700;letter-spacing:-0.945px;">note</span>
<span class="t" style="left:2433.00px;top:391px;font-size:24px;line-height:30px;font-weight:700;letter-spacing:-0.767px;">azioni</span>
<div style="left:357px;top:449px;width:22.3px;height:22.3px;border:2px solid #6f6f6f;border-radius:5px;background:#fff"></div>
<span class="t" style="left:392.50px;top:448px;font-size:24px;line-height:30px;letter-spacing:-0.110px;">Quatro Ciàcoe : mensile in dialeto de cultura e tradission vènete.</span>
<span class="t" style="left:1403.80px;top:448px;font-size:24px;line-height:30px;letter-spacing:0.144px;">XXXI</span>
<span class="t" style="left:1488.00px;top:448px;font-size:24px;line-height:30px;letter-spacing:0.885px;">1/12</span>
<span class="t" style="left:1664.50px;top:448px;font-size:24px;line-height:30px;letter-spacing:0.101px;">28/12/2012</span>
<span class="t" style="left:1835.50px;top:448px;font-size:24px;line-height:30px;letter-spacing:0.885px;">1/12</span>
<span class="t" style="left:1989.50px;top:448px;font-size:24px;line-height:30px;letter-spacing:0.444px;">0/0</span>
<a class="t u" style="left:2298.60px;top:451px;font-size:20.2px;line-height:26px;color:#0000f4;letter-spacing:-0.385px;">vedi</a>
<a class="t u" style="left:2341.90px;top:451px;font-size:20.2px;line-height:26px;color:#0000f4;letter-spacing:-0.130px;">modifica</a>
<a class="t u" style="left:2424.40px;top:451px;font-size:20.2px;line-height:26px;color:#0000f4;letter-spacing:-0.154px;">elimina</a>
<a class="t u" style="left:2495.80px;top:451px;font-size:20.2px;line-height:26px;color:#0000f4;letter-spacing:-0.182px;">agg. esemplare</a>
<div style="left:357px;top:495px;width:22.3px;height:22.3px;border:2px solid #6f6f6f;border-radius:5px;background:#fff"></div>
<span class="t" style="left:392.50px;top:494px;font-size:24px;line-height:30px;letter-spacing:-0.145px;">Cimbri = Tzimbar : vita e cultura delle comunita cimbre</span>
<span class="t" style="left:1403.80px;top:494px;font-size:24px;line-height:30px;letter-spacing:1.461px;">XVII</span>
<span class="t" style="left:1489.00px;top:494px;font-size:24px;line-height:30px;letter-spacing:-0.200px;">37</span>
<span class="t" style="left:1664.50px;top:494px;font-size:24px;line-height:30px;letter-spacing:1.407px;">---</span>
<span class="t" style="left:1836.50px;top:494px;font-size:24px;line-height:30px;letter-spacing:-0.200px;">0</span>
<span class="t" style="left:1989.50px;top:494px;font-size:24px;line-height:30px;letter-spacing:0.944px;">0/1</span>
<a class="t u" style="left:2298.60px;top:497px;font-size:20.2px;line-height:26px;color:#0000f4;letter-spacing:-0.385px;">vedi</a>
<a class="t u" style="left:2341.90px;top:497px;font-size:20.2px;line-height:26px;color:#0000f4;letter-spacing:-0.130px;">modifica</a>
<a class="t u" style="left:2424.40px;top:497px;font-size:20.2px;line-height:26px;color:#0000f4;letter-spacing:-0.154px;">elimina</a>
<a class="t u" style="left:2495.80px;top:497px;font-size:20.2px;line-height:26px;color:#0000f4;letter-spacing:-0.182px;">agg. esemplare</a>
<div style="left:357px;top:540px;width:22.3px;height:22.3px;border:2px solid #6f6f6f;border-radius:5px;background:#fff"></div>
<span class="t" style="left:392.50px;top:539px;font-size:24px;line-height:30px;letter-spacing:-0.145px;">Cimbri = Tzimbar : vita e cultura delle comunita cimbre</span>
<span class="t" style="left:1403.80px;top:539px;font-size:24px;line-height:30px;letter-spacing:1.461px;">XVII</span>
<span class="t" style="left:1489.00px;top:539px;font-size:24px;line-height:30px;letter-spacing:-0.200px;">36</span>
<span class="t" style="left:1664.50px;top:539px;font-size:24px;line-height:30px;letter-spacing:1.407px;">---</span>
<span class="t" style="left:1836.50px;top:539px;font-size:24px;line-height:30px;letter-spacing:-0.200px;">0</span>
<span class="t" style="left:1989.50px;top:539px;font-size:24px;line-height:30px;letter-spacing:0.944px;">0/1</span>
<a class="t u" style="left:2298.60px;top:542px;font-size:20.2px;line-height:26px;color:#0000f4;letter-spacing:-0.385px;">vedi</a>
<a class="t u" style="left:2341.90px;top:542px;font-size:20.2px;line-height:26px;color:#0000f4;letter-spacing:-0.130px;">modifica</a>
<a class="t u" style="left:2424.40px;top:542px;font-size:20.2px;line-height:26px;color:#0000f4;letter-spacing:-0.154px;">elimina</a>
<a class="t u" style="left:2495.80px;top:542px;font-size:20.2px;line-height:26px;color:#0000f4;letter-spacing:-0.182px;">agg. esemplare</a>
<div style="left:357px;top:586px;width:22.3px;height:22.3px;border:2px solid #6f6f6f;border-radius:5px;background:#fff"></div>
<span class="t" style="left:392.50px;top:585px;font-size:24px;line-height:30px;letter-spacing:-0.145px;">Cimbri = Tzimbar : vita e cultura delle comunita cimbre</span>
<span class="t" style="left:1403.80px;top:585px;font-size:24px;line-height:30px;letter-spacing:1.461px;">XVII</span>
<span class="t" style="left:1489.00px;top:585px;font-size:24px;line-height:30px;letter-spacing:-0.200px;">35</span>
<span class="t" style="left:1664.50px;top:585px;font-size:24px;line-height:30px;letter-spacing:1.407px;">---</span>
<span class="t" style="left:1836.50px;top:585px;font-size:24px;line-height:30px;letter-spacing:-0.200px;">0</span>
<span class="t" style="left:1989.50px;top:585px;font-size:24px;line-height:30px;letter-spacing:0.944px;">0/1</span>
<a class="t u" style="left:2298.60px;top:588px;font-size:20.2px;line-height:26px;color:#0000f4;letter-spacing:-0.385px;">vedi</a>
<a class="t u" style="left:2341.90px;top:588px;font-size:20.2px;line-height:26px;color:#0000f4;letter-spacing:-0.130px;">modifica</a>
<a class="t u" style="left:2424.40px;top:588px;font-size:20.2px;line-height:26px;color:#0000f4;letter-spacing:-0.154px;">elimina</a>
<a class="t u" style="left:2495.80px;top:588px;font-size:20.2px;line-height:26px;color:#0000f4;letter-spacing:-0.182px;">agg. esemplare</a>
<div style="left:357px;top:631px;width:22.3px;height:22.3px;border:2px solid #6f6f6f;border-radius:5px;background:#fff"></div>
<span class="t" style="left:392.50px;top:630px;font-size:24px;line-height:30px;letter-spacing:-0.145px;">Cimbri = Tzimbar : vita e cultura delle comunita cimbre</span>
<span class="t" style="left:1403.80px;top:630px;font-size:24px;line-height:30px;letter-spacing:0.823px;">XVI</span>
<span class="t" style="left:1489.00px;top:630px;font-size:24px;line-height:30px;letter-spacing:-0.200px;">33</span>
<span class="t" style="left:1664.50px;top:630px;font-size:24px;line-height:30px;letter-spacing:1.407px;">---</span>
<span class="t" style="left:1836.50px;top:630px;font-size:24px;line-height:30px;letter-spacing:-0.200px;">0</span>
<span class="t" style="left:1989.50px;top:630px;font-size:24px;line-height:30px;letter-spacing:0.944px;">0/1</span>
<a class="t u" style="left:2298.60px;top:633px;font-size:20.2px;line-height:26px;color:#0000f4;letter-spacing:-0.385px;">vedi</a>
<a class="t u" style="left:2341.90px;top:633px;font-size:20.2px;line-height:26px;color:#0000f4;letter-spacing:-0.130px;">modifica</a>
<a class="t u" style="left:2424.40px;top:633px;font-size:20.2px;line-height:26px;color:#0000f4;letter-spacing:-0.154px;">elimina</a>
<a class="t u" style="left:2495.80px;top:633px;font-size:20.2px;line-height:26px;color:#0000f4;letter-spacing:-0.182px;">agg. esemplare</a>
<div style="left:357px;top:676px;width:22.3px;height:22.3px;border:2px solid #6f6f6f;border-radius:5px;background:#fff"></div>
<span class="t" style="left:392.50px;top:675px;font-size:24px;line-height:30px;letter-spacing:-0.145px;">Cimbri = Tzimbar : vita e cultura delle comunita cimbre</span>
<span class="t" style="left:1403.80px;top:675px;font-size:24px;line-height:30px;letter-spacing:-2.189px;">XV</span>
<span class="t" style="left:1489.00px;top:675px;font-size:24px;line-height:30px;letter-spacing:-0.200px;">32</span>
<span class="t" style="left:1664.50px;top:675px;font-size:24px;line-height:30px;letter-spacing:1.407px;">---</span>
<span class="t" style="left:1836.50px;top:675px;font-size:24px;line-height:30px;letter-spacing:-0.200px;">0</span>
<span class="t" style="left:1989.50px;top:675px;font-size:24px;line-height:30px;letter-spacing:0.944px;">0/1</span>
<a class="t u" style="left:2298.60px;top:678px;font-size:20.2px;line-height:26px;color:#0000f4;letter-spacing:-0.385px;">vedi</a>
<a class="t u" style="left:2341.90px;top:678px;font-size:20.2px;line-height:26px;color:#0000f4;letter-spacing:-0.130px;">modifica</a>
<a class="t u" style="left:2424.40px;top:678px;font-size:20.2px;line-height:26px;color:#0000f4;letter-spacing:-0.154px;">elimina</a>
<a class="t u" style="left:2495.80px;top:678px;font-size:20.2px;line-height:26px;color:#0000f4;letter-spacing:-0.182px;">agg. esemplare</a>
<div style="left:357px;top:722px;width:22.3px;height:22.3px;border:2px solid #6f6f6f;border-radius:5px;background:#fff"></div>
<span class="t" style="left:391.50px;top:721px;font-size:24px;line-height:30px;letter-spacing:-0.060px;">Il Risorgimento : rivista di storia del Risorgimento e storia contemporanea</span>
<span class="t" style="left:1403.80px;top:721px;font-size:24px;line-height:30px;letter-spacing:1.453px;">XLVI</span>
<span class="t" style="left:1489.00px;top:721px;font-size:24px;line-height:30px;letter-spacing:-0.200px;">3</span>
<span class="t" style="left:1664.50px;top:721px;font-size:24px;line-height:30px;letter-spacing:0.101px;">04/12/2007</span>
<span class="t" style="left:1836.50px;top:721px;font-size:24px;line-height:30px;letter-spacing:-0.200px;">0</span>
<span class="t" style="left:1989.50px;top:721px;font-size:24px;line-height:30px;letter-spacing:0.444px;">0/0</span>
<a class="t u" style="left:2298.60px;top:724px;font-size:20.2px;line-height:26px;color:#0000f4;letter-spacing:-0.385px;">vedi</a>
<a class="t u" style="left:2341.90px;top:724px;font-size:20.2px;line-height:26px;color:#0000f4;letter-spacing:-0.130px;">modifica</a>
<a class="t u" style="left:2424.40px;top:724px;font-size:20.2px;line-height:26px;color:#0000f4;letter-spacing:-0.154px;">elimina</a>
<a class="t u" style="left:2495.80px;top:724px;font-size:20.2px;line-height:26px;color:#0000f4;letter-spacing:-0.182px;">agg. esemplare</a>
<div style="left:357px;top:767px;width:22.3px;height:22.3px;border:2px solid #6f6f6f;border-radius:5px;background:#fff"></div>
<span class="t" style="left:392.50px;top:766px;font-size:24px;line-height:30px;letter-spacing:-0.145px;">Cimbri = Tzimbar : vita e cultura delle comunita cimbre</span>
<span class="t" style="left:1403.80px;top:766px;font-size:24px;line-height:30px;letter-spacing:-0.176px;">XIX</span>
<span class="t" style="left:1489.00px;top:766px;font-size:24px;line-height:30px;letter-spacing:-0.200px;">39</span>
<span class="t" style="left:1664.50px;top:766px;font-size:24px;line-height:30px;letter-spacing:1.407px;">---</span>
<span class="t" style="left:1836.50px;top:766px;font-size:24px;line-height:30px;letter-spacing:-0.200px;">0</span>
<span class="t" style="left:1989.50px;top:766px;font-size:24px;line-height:30px;letter-spacing:0.944px;">0/1</span>
<a class="t u" style="left:2298.60px;top:769px;font-size:20.2px;line-height:26px;color:#0000f4;letter-spacing:-0.385px;">vedi</a>
<a class="t u" style="left:2341.90px;top:769px;font-size:20.2px;line-height:26px;color:#0000f4;letter-spacing:-0.130px;">modifica</a>
<a class="t u" style="left:2424.40px;top:769px;font-size:20.2px;line-height:26px;color:#0000f4;letter-spacing:-0.154px;">elimina</a>
<a class="t u" style="left:2495.80px;top:769px;font-size:20.2px;line-height:26px;color:#0000f4;letter-spacing:-0.182px;">agg. esemplare</a>
<div style="left:357px;top:812px;width:22.3px;height:22.3px;border:2px solid #6f6f6f;border-radius:5px;background:#fff"></div>
<span class="t" style="left:392.50px;top:811px;font-size:24px;line-height:30px;letter-spacing:-0.145px;">Cimbri = Tzimbar : vita e cultura delle comunita cimbre</span>
<span class="t" style="left:1403.80px;top:811px;font-size:24px;line-height:30px;letter-spacing:0.074px;">XIV</span>
<span class="t" style="left:1489.00px;top:811px;font-size:24px;line-height:30px;letter-spacing:-0.200px;">30</span>
<span class="t" style="left:1664.50px;top:811px;font-size:24px;line-height:30px;letter-spacing:1.407px;">---</span>
<span class="t" style="left:1836.50px;top:811px;font-size:24px;line-height:30px;letter-spacing:-0.200px;">0</span>
<span class="t" style="left:1989.50px;top:811px;font-size:24px;line-height:30px;letter-spacing:0.944px;">0/1</span>
<a class="t u" style="left:2298.60px;top:814px;font-size:20.2px;line-height:26px;color:#0000f4;letter-spacing:-0.385px;">vedi</a>
<a class="t u" style="left:2341.90px;top:814px;font-size:20.2px;line-height:26px;color:#0000f4;letter-spacing:-0.130px;">modifica</a>
<a class="t u" style="left:2424.40px;top:814px;font-size:20.2px;line-height:26px;color:#0000f4;letter-spacing:-0.154px;">elimina</a>
<a class="t u" style="left:2495.80px;top:814px;font-size:20.2px;line-height:26px;color:#0000f4;letter-spacing:-0.182px;">agg. esemplare</a>
<div style="left:357px;top:858px;width:22.3px;height:22.3px;border:2px solid #6f6f6f;border-radius:5px;background:#fff"></div>
<span class="t" style="left:392.50px;top:857px;font-size:24px;line-height:30px;letter-spacing:-0.145px;">Cimbri = Tzimbar : vita e cultura delle comunita cimbre</span>
<span class="t" style="left:1403.80px;top:857px;font-size:24px;line-height:30px;letter-spacing:0.074px;">XIV</span>
<span class="t" style="left:1489.00px;top:857px;font-size:24px;line-height:30px;letter-spacing:-0.200px;">29</span>
<span class="t" style="left:1664.50px;top:857px;font-size:24px;line-height:30px;letter-spacing:1.407px;">---</span>
<span class="t" style="left:1836.50px;top:857px;font-size:24px;line-height:30px;letter-spacing:-0.200px;">0</span>
<span class="t" style="left:1989.50px;top:857px;font-size:24px;line-height:30px;letter-spacing:0.944px;">0/1</span>
<a class="t u" style="left:2298.60px;top:860px;font-size:20.2px;line-height:26px;color:#0000f4;letter-spacing:-0.385px;">vedi</a>
<a class="t u" style="left:2341.90px;top:860px;font-size:20.2px;line-height:26px;color:#0000f4;letter-spacing:-0.130px;">modifica</a>
<a class="t u" style="left:2424.40px;top:860px;font-size:20.2px;line-height:26px;color:#0000f4;letter-spacing:-0.154px;">elimina</a>
<a class="t u" style="left:2495.80px;top:860px;font-size:20.2px;line-height:26px;color:#0000f4;letter-spacing:-0.182px;">agg. esemplare</a>
<span class="t" style="left:2282.13px;top:894px;font-size:24px;line-height:30px;">1</span>
<a class="t u" style="left:2303.73px;top:894px;font-size:24px;line-height:30px;color:#0000f4;">2</a>
<a class="t u" style="left:2324.89px;top:894px;font-size:24px;line-height:30px;color:#0000f4;">3</a>
<a class="t u" style="left:2345.40px;top:894px;font-size:24px;line-height:30px;color:#0000f4;">4</a>
<a class="t u" style="left:2366.57px;top:894px;font-size:24px;line-height:30px;color:#0000f4;">5</a>
<a class="t u" style="left:2387.51px;top:894px;font-size:24px;line-height:30px;color:#0000f4;">6</a>
<a class="t u" style="left:2408.67px;top:894px;font-size:24px;line-height:30px;color:#0000f4;">7</a>
<a class="t u" style="left:2429.19px;top:894px;font-size:24px;line-height:30px;color:#0000f4;">8</a>
<a class="t u" style="left:2450.13px;top:894px;font-size:24px;line-height:30px;color:#0000f4;">9</a>
<a class="t u" style="left:2472.40px;top:894px;font-size:24px;line-height:30px;color:#0000f4;letter-spacing:-1.134px;">10</a>
<a class="t u" style="left:2505.50px;top:894px;font-size:24px;line-height:30px;color:#0000f4;">»</a>
<a class="t u" style="left:2527.20px;top:894px;font-size:24px;line-height:30px;color:#0000f4;letter-spacing:-0.100px;">&gt;&gt;</a>
<span class="t" style="left:2570.68px;top:894px;font-size:24px;line-height:30px;">/</span>
<span class="t" style="left:2588.30px;top:894px;font-size:24px;line-height:30px;letter-spacing:-0.734px;">3835</span>
<span class="t" style="left:2450.90px;top:927px;font-size:20.2px;line-height:26px;letter-spacing:0.053px;">num.righe:</span>
<div style="left:2557.3px;top:922px;width:83.6px;height:32px;border:1px solid #707070;border-radius:3.500px;background:#fff"><svg style="right:8px;top:11.5px" width="18" height="10" viewBox="0 0 18 10"><path d="M1.600 1.400 L8.900 8 L16.200 1.400" fill="none" stroke="#0c0c0c" stroke-width="2.200"/></svg></div>
<span class="t" style="left:2566.40px;top:924px;font-size:24.5px;line-height:29px;font-family:'Liberation Sans','DejaVu Sans',sans-serif;letter-spacing:-1.026px;">10</span>
<div style="left:351px;top:950px;width:186px;height:42px;background:#fff;border-right:4.600px solid #c9c29c;border-bottom:5px solid #d3cda6"></div>
<span class="t" style="left:360.90px;top:955px;font-size:24px;line-height:30px;letter-spacing:-0.158px;">totale:</span>
<span class="t" style="left:444.50px;top:955px;font-size:24px;line-height:30px;font-weight:700;letter-spacing:0.727px;">38347</span>
<!-- footer -->
<div style="left:328px;top:1186px;width:2347px;height:57px;border:1px solid #6a6a6a;border-right:0;background:#dedeff"></div>
<a class="t u" style="left:2089.40px;top:1195px;font-size:20.2px;line-height:26px;color:#0000f4;letter-spacing:-0.117px;">bibl. corrente</a>
<svg style="left:2222px;top:1202.500px" width="10" height="14" viewBox="0 0 10 14"><path d="M1 1 L8.500 7 L1 13Z" fill="#111"/></svg>
<div style="left:2243.2px;top:1191.4px;width:406.8px;height:30.8px;border:1px solid #707070;border-radius:3.500px;background:#fff"><svg style="right:8px;top:10.5px" width="18" height="10" viewBox="0 0 18 10"><path d="M1.600 1.400 L8.900 8 L16.200 1.400" fill="none" stroke="#0c0c0c" stroke-width="2.200"/></svg></div>
<span class="t" style="left:2250.90px;top:1193px;font-size:24.5px;line-height:29px;font-family:'Liberation Sans','DejaVu Sans',sans-serif;letter-spacing:0.382px;">SBPvr</span>
<div style="left:355.4px;top:7px;width:140.1px;height:67.2px;border:4.400px solid #ef3e44;border-radius:7px;background:rgba(28,28,88,.18);box-shadow:0 1px 2px rgba(0,0,0,.55)"></div>
<div style="left:505.1px;top:67.9px;width:37.8px;height:37.8px;border:2.300px solid #ff0000;border-radius:50%;background:rgba(50,62,255,.27);box-shadow:0 1px 1.500px rgba(0,0,0,.3)"></div>
<span class="t" style="left:516.10px;top:73px;font-size:24.5px;line-height:29px;font-family:'Liberation Sans','DejaVu Sans',sans-serif;font-weight:700;color:#ff0000;">1</span>
</body>
</html>
